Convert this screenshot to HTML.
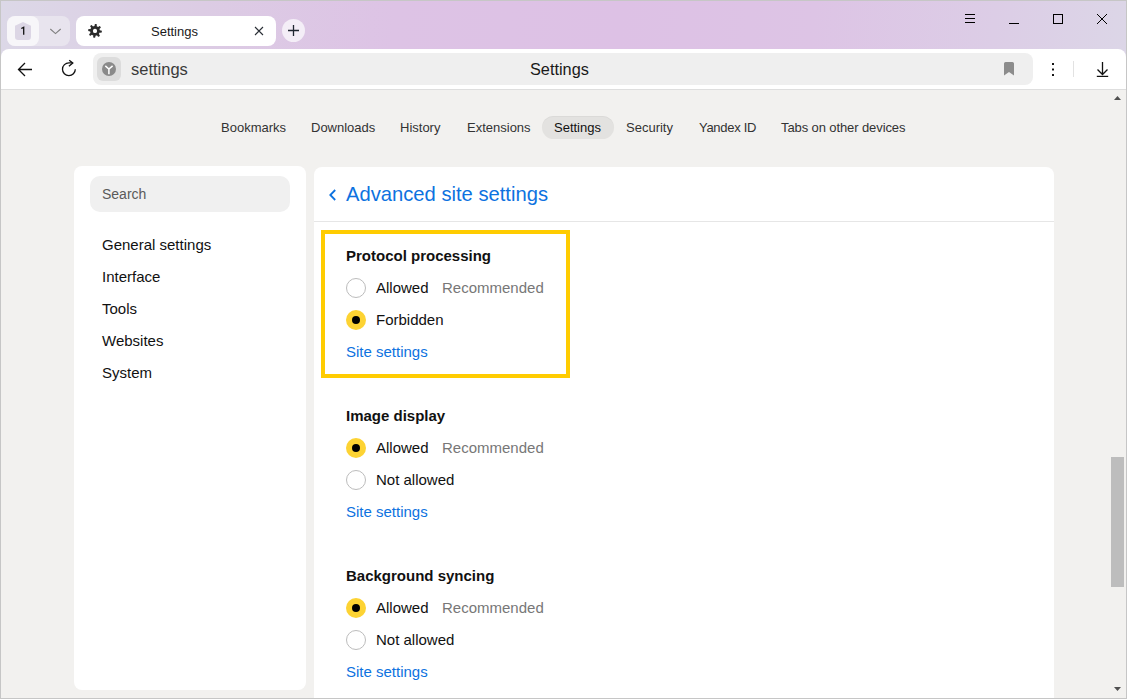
<!DOCTYPE html>
<html><head><meta charset="utf-8">
<style>
*{box-sizing:border-box;margin:0;padding:0}
html,body{width:1127px;height:699px;overflow:hidden;background:#f2f1ef}
body{position:relative;font-family:"Liberation Sans",sans-serif;color:#000}
.a{position:absolute}
.t{position:absolute;white-space:nowrap;line-height:1}
#titlebar{left:0;top:0;width:1127px;height:60px;background:linear-gradient(95deg,#dcd8e7 0%,#dccce4 18%,#ddc3e5 35%,#ddc1e5 55%,#ddc4e5 72%,#dccde6 88%,#dcd6e7 100%)}
#toolbar{left:1px;top:49px;width:1125px;height:41px;background:#fff;border-radius:8px 8px 0 0;border-bottom:1px solid #dedede}
#frame{left:0;top:0;width:1127px;height:699px;border:1px solid #c6c6c6;pointer-events:none}
</style></head><body>
<div id="titlebar" class="a"></div>
<!-- tab group -->
<div class="a" style="left:7px;top:16px;width:63px;height:30px;background:#e8e4ee;border-radius:8px"></div>
<div class="a" style="left:7px;top:16px;width:32px;height:30px;background:#f7f6f9;border-radius:8px"></div>
<svg class="a" style="left:15px;top:22px" width="16" height="18" viewBox="0 0 16 18"><path d="M8 0 L16 3.8 V14.8 Q16 18 12.8 18 H3.2 Q0 18 0 14.8 V3.8 Z" fill="#dcd6e5"/></svg>
<svg class="a" style="left:15px;top:22px" width="16" height="18" viewBox="0 0 16 18"><path d="M6.3 6.5 L8.7 5.3 V12.8" fill="none" stroke="#111" stroke-width="1.3"/></svg>
<svg class="a" style="left:49px;top:27px" width="13" height="8" viewBox="0 0 13 8"><path d="M1.3 2 L6.5 6.6 L11.7 2" fill="none" stroke="#808080" stroke-width="1.15"/></svg>
<!-- tab -->
<div class="a" style="left:76px;top:16px;width:200px;height:30px;background:#fff;border-radius:8px"></div>
<svg class="a" style="left:88px;top:24px" width="14" height="14" viewBox="0 0 14 14"><g transform="translate(7 6.9) rotate(7)"><g fill="#2b2b2b"><rect x="-1.1" y="-6.9" width="2.2" height="13.8" rx="0.8"/><rect x="-1.1" y="-6.9" width="2.2" height="13.8" rx="0.8" transform="rotate(45)"/><rect x="-1.1" y="-6.9" width="2.2" height="13.8" rx="0.8" transform="rotate(90)"/><rect x="-1.1" y="-6.9" width="2.2" height="13.8" rx="0.8" transform="rotate(135)"/><circle r="4.9"/></g><circle r="2.1" fill="#fff"/></g></svg>
<div class="t" style="left:151px;top:25px;font-size:13px;color:#1a1a1a">Settings</div>
<svg class="a" style="left:254px;top:26px" width="10" height="10" viewBox="0 0 10 10"><path d="M1 1 L9 9 M9 1 L1 9" stroke="#2a2f36" stroke-width="1.1"/></svg>
<div class="a" style="left:282px;top:19px;width:23px;height:23px;border-radius:50%;background:#f4eef7"></div>
<svg class="a" style="left:287px;top:24px" width="13" height="13" viewBox="0 0 13 13"><path d="M6.5 1 V12 M1 6.5 H12" stroke="#1f2630" stroke-width="1.3"/></svg>
<!-- window controls -->
<svg class="a" style="left:960px;top:8px" width="160" height="22" viewBox="960 8 160 22"><g stroke="#000" stroke-width="1" fill="none" shape-rendering="crispEdges"><path d="M965 14.5H975M965 18.5H975M965 22.5H975"/><path d="M1009 23.5H1019"/><rect x="1053.5" y="14.5" width="9" height="9"/></g><path d="M1097 14 L1107 24 M1107 14 L1097 24" stroke="#000" stroke-width="1"/></svg>

<!-- toolbar -->
<div id="toolbar" class="a"></div>
<svg class="a" style="left:16px;top:61px" width="18" height="17" viewBox="0 0 18 17"><path d="M9 2 L2.5 8.5 L9 15 M2.5 8.5 H16" fill="none" stroke="#111" stroke-width="1.3"/></svg>
<svg class="a" style="left:58px;top:56px" width="22" height="24" viewBox="0 0 22 24"><path d="M17.3 13.2 A6.4 6.4 0 1 1 11 6.8 H14.2" fill="none" stroke="#111" stroke-width="1.3"/><path d="M11.2 4.3 L14.8 7.1 L10.9 10.2" fill="none" stroke="#111" stroke-width="1.3"/></svg>
<div class="a" style="left:93px;top:53px;width:940px;height:32px;background:#efefef;border-radius:8px"></div>
<div class="a" style="left:97px;top:57px;width:24px;height:24px;background:#dcdcdc;border-radius:6px"></div>
<svg class="a" style="left:102px;top:62px" width="14" height="14" viewBox="0 0 14 14"><circle cx="7" cy="7" r="7" fill="#8a8a8a"/><path d="M3.3 3.9 L6.9 7 L10.6 3.9 M6.9 7 V12.3" fill="none" stroke="#fff" stroke-width="1.5"/></svg>
<div class="t" style="left:131px;top:61px;font-size:16.5px;color:#3a3a3a">settings</div>
<div class="t" style="left:530px;top:61px;font-size:16.3px;color:#1a1a1a">Settings</div>
<svg class="a" style="left:1004px;top:62px" width="10" height="14" viewBox="0 0 10 14"><path d="M0 1.6 Q0 0 1.6 0 H8.4 Q10 0 10 1.6 V13.4 L5 10.1 L0 13.4 Z" fill="#8c8c8c"/></svg>
<svg class="a" style="left:1050px;top:60px" width="6" height="18" viewBox="0 0 6 18"><g fill="#111"><rect x="2" y="3" width="2" height="2" rx="0.3"/><rect x="2" y="8.4" width="2" height="2" rx="0.3"/><rect x="2" y="14" width="2" height="2" rx="0.3"/></g></svg>
<div class="a" style="left:1073px;top:61px;width:1px;height:16px;background:#e2e2e2"></div>
<svg class="a" style="left:1095px;top:61px" width="15" height="17" viewBox="0 0 15 17"><path d="M7.5 1 V13.5 M2.5 8.5 L7.5 13.5 L12.5 8.5" fill="none" stroke="#111" stroke-width="1.3"/><path d="M1.8 15.4 H13.2" stroke="#111" stroke-width="1.25"/></svg>

<!-- page nav -->
<div class="a" style="left:542px;top:116px;width:72px;height:23px;background:#e3e2e0;border-radius:12px;box-shadow:inset 0 1px 0 rgba(0,0,0,0.035)"></div>
<div class="t" style="left:221px;top:121px;font-size:13px;color:#333">Bookmarks</div>
<div class="t" style="left:311px;top:121px;font-size:13px;color:#333">Downloads</div>
<div class="t" style="left:400px;top:121px;font-size:13px;color:#333">History</div>
<div class="t" style="left:467px;top:121px;font-size:13px;color:#333">Extensions</div>
<div class="t" style="left:554px;top:121px;font-size:13px;color:#111">Settings</div>
<div class="t" style="left:626px;top:121px;font-size:13px;color:#333">Security</div>
<div class="t" style="left:699px;top:121px;font-size:13px;color:#333;letter-spacing:-0.3px">Yandex ID</div>
<div class="t" style="left:781px;top:121px;font-size:13px;color:#333;letter-spacing:-0.1px">Tabs on other devices</div>

<!-- sidebar -->
<div class="a" style="left:74px;top:166px;width:232px;height:524px;background:#fff;border-radius:8px"></div>
<div class="a" style="left:90px;top:176px;width:200px;height:36px;background:#f0f0f0;border-radius:10px"></div>
<div class="t" style="left:102px;top:187px;font-size:14px;color:#5a5a5a">Search</div>
<div class="t" style="left:102px;top:237px;font-size:15px;color:#111">General settings</div>
<div class="t" style="left:102px;top:269px;font-size:15px;color:#111">Interface</div>
<div class="t" style="left:102px;top:301px;font-size:15px;color:#111">Tools</div>
<div class="t" style="left:102px;top:333px;font-size:15px;color:#111">Websites</div>
<div class="t" style="left:102px;top:365px;font-size:15px;color:#111">System</div>

<!-- main card -->
<div class="a" style="left:314px;top:167px;width:740px;height:540px;background:#fff;border-radius:8px"></div>
<div class="a" style="left:314px;top:221px;width:740px;height:1px;background:#e6e6e6"></div>
<svg class="a" style="left:328px;top:189px" width="10" height="12" viewBox="0 0 10 12"><path d="M7.2 1 L2.3 6 L7.2 11" fill="none" stroke="#0d72e0" stroke-width="1.8"/></svg>
<div class="t" style="left:346px;top:184px;font-size:20.2px;color:#0d72e0">Advanced site settings</div>

<div class="a" style="left:321px;top:230px;width:249px;height:148px;border:4px solid #ffcc00"></div>

<div class="t" style="left:346px;top:248.2px;font-size:15px;font-weight:700;color:#111">Protocol processing</div>
<div class="a" style="left:346px;top:278px;width:20px;height:20px;border-radius:50%;border:1px solid #bcbcbc;background:#fff"></div>
<div class="t" style="left:376px;top:280.2px;font-size:15px;color:#111">Allowed</div>
<div class="t" style="left:442px;top:280.2px;font-size:15px;color:#777">Recommended</div>
<div class="a" style="left:346px;top:310px;width:20px;height:20px;border-radius:50%;background:#fdd333"></div>
<div class="a" style="left:352px;top:316px;width:8px;height:8px;border-radius:50%;background:#000"></div>
<div class="t" style="left:376px;top:312.2px;font-size:15px;color:#111">Forbidden</div>
<div class="t" style="left:346px;top:344.2px;font-size:15px;color:#0d72e0">Site settings</div>
<div class="t" style="left:346px;top:408.2px;font-size:15px;font-weight:700;color:#111">Image display</div>
<div class="a" style="left:346px;top:438px;width:20px;height:20px;border-radius:50%;background:#fdd333"></div>
<div class="a" style="left:352px;top:444px;width:8px;height:8px;border-radius:50%;background:#000"></div>
<div class="t" style="left:376px;top:440.2px;font-size:15px;color:#111">Allowed</div>
<div class="t" style="left:442px;top:440.2px;font-size:15px;color:#777">Recommended</div>
<div class="a" style="left:346px;top:470px;width:20px;height:20px;border-radius:50%;border:1px solid #bcbcbc;background:#fff"></div>
<div class="t" style="left:376px;top:472.2px;font-size:15px;color:#111">Not allowed</div>
<div class="t" style="left:346px;top:504.2px;font-size:15px;color:#0d72e0">Site settings</div>
<div class="t" style="left:346px;top:568.2px;font-size:15px;font-weight:700;color:#111">Background syncing</div>
<div class="a" style="left:346px;top:598px;width:20px;height:20px;border-radius:50%;background:#fdd333"></div>
<div class="a" style="left:352px;top:604px;width:8px;height:8px;border-radius:50%;background:#000"></div>
<div class="t" style="left:376px;top:600.2px;font-size:15px;color:#111">Allowed</div>
<div class="t" style="left:442px;top:600.2px;font-size:15px;color:#777">Recommended</div>
<div class="a" style="left:346px;top:630px;width:20px;height:20px;border-radius:50%;border:1px solid #bcbcbc;background:#fff"></div>
<div class="t" style="left:376px;top:632.2px;font-size:15px;color:#111">Not allowed</div>
<div class="t" style="left:346px;top:664.2px;font-size:15px;color:#0d72e0">Site settings</div>
<svg class="a" style="left:1113px;top:95px" width="10" height="6" viewBox="0 0 10 6"><path d="M1 5 L4.5 1 L8 5 Z" fill="#505050"/></svg>
<div class="a" style="left:1111px;top:457px;width:13px;height:130px;background:#bdbdbd"></div>
<svg class="a" style="left:1113px;top:686px" width="10" height="6" viewBox="0 0 10 6"><path d="M1 1 L4.5 5 L8 1 Z" fill="#505050"/></svg>

<div id="frame" class="a"></div>
</body></html>
